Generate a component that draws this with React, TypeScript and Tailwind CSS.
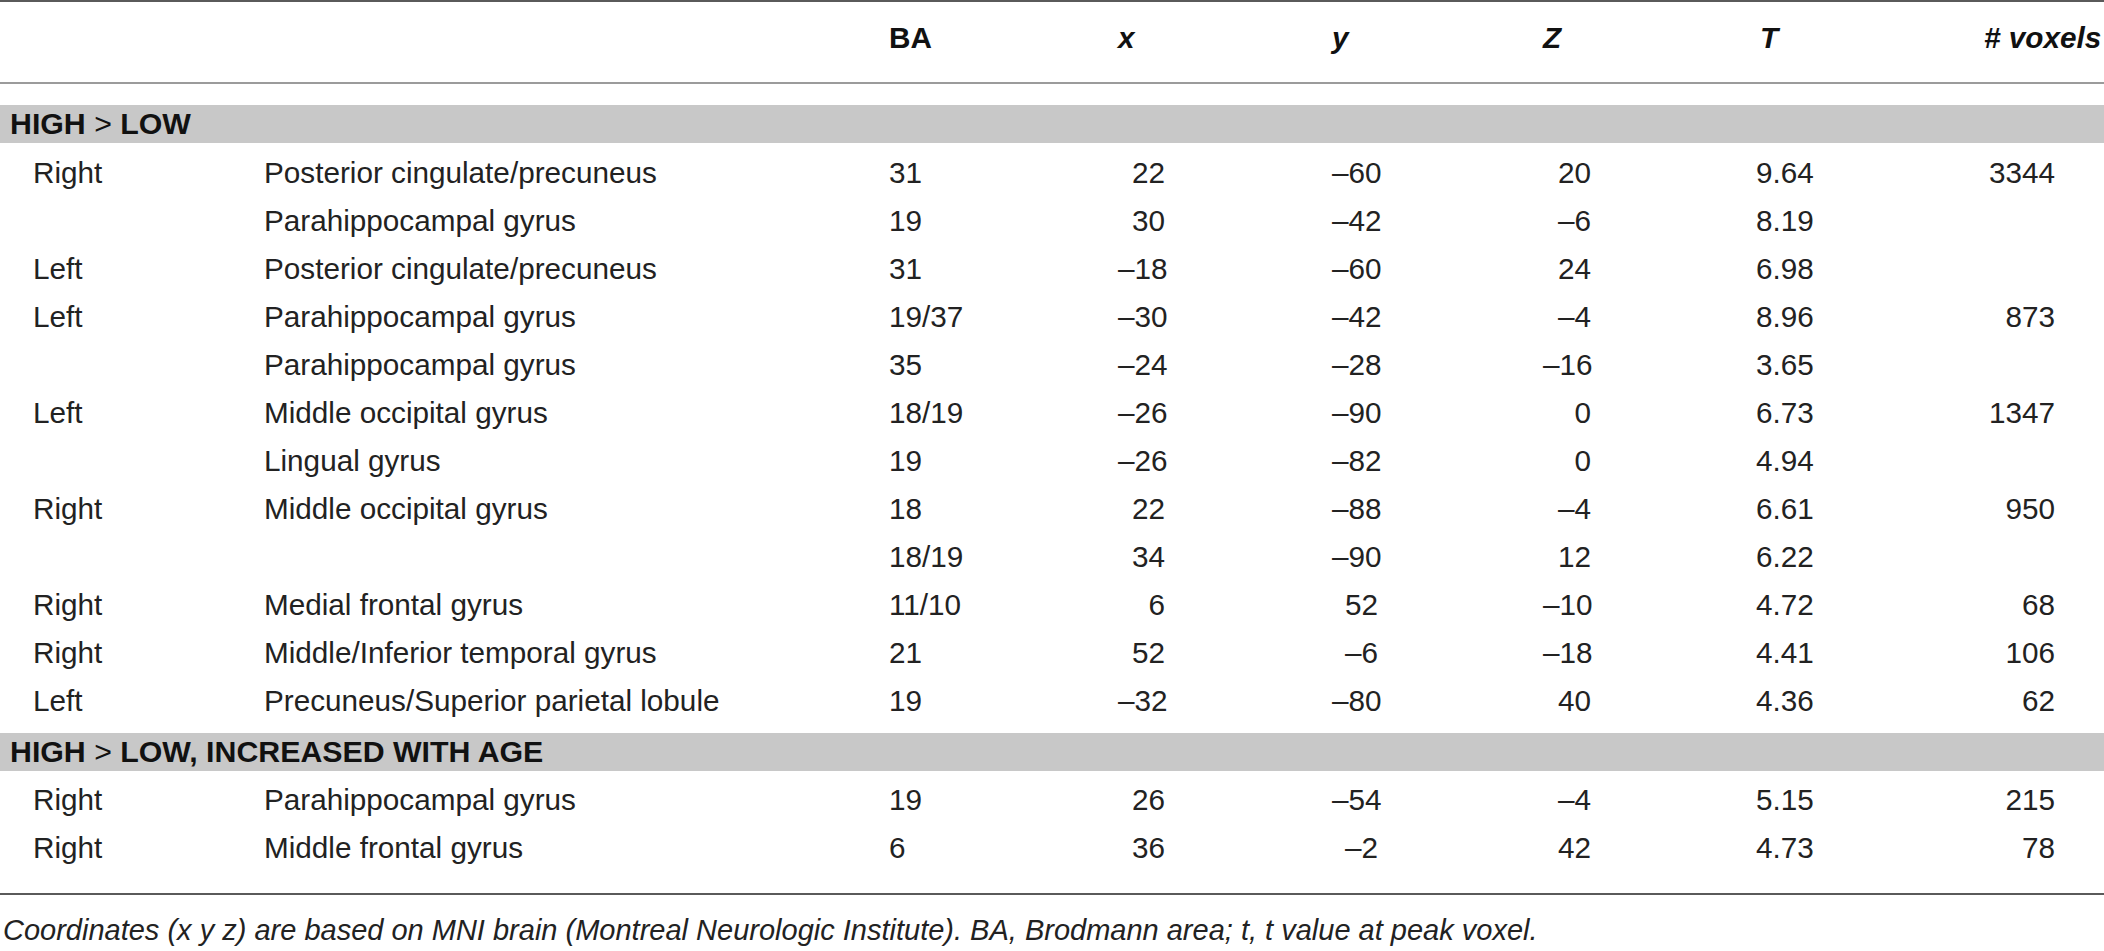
import React from "react";

type Row = [string, string, string, string, string, string, string, string];

const group1: Row[] = [
  ["Right", "Posterior cingulate/precuneus", "31", "22", "–60", "20", "9.64", "3344"],
  ["", "Parahippocampal gyrus", "19", "30", "–42", "–6", "8.19", ""],
  ["Left", "Posterior cingulate/precuneus", "31", "–18", "–60", "24", "6.98", ""],
  ["Left", "Parahippocampal gyrus", "19/37", "–30", "–42", "–4", "8.96", "873"],
  ["", "Parahippocampal gyrus", "35", "–24", "–28", "–16", "3.65", ""],
  ["Left", "Middle occipital gyrus", "18/19", "–26", "–90", "0", "6.73", "1347"],
  ["", "Lingual gyrus", "19", "–26", "–82", "0", "4.94", ""],
  ["Right", "Middle occipital gyrus", "18", "22", "–88", "–4", "6.61", "950"],
  ["", "", "18/19", "34", "–90", "12", "6.22", ""],
  ["Right", "Medial frontal gyrus", "11/10", "6", "52", "–10", "4.72", "68"],
  ["Right", "Middle/Inferior temporal gyrus", "21", "52", "–6", "–18", "4.41", "106"],
  ["Left", "Precuneus/Superior parietal lobule", "19", "–32", "–80", "40", "4.36", "62"],
];

const group2: Row[] = [
  ["Right", "Parahippocampal gyrus", "19", "26", "–54", "–4", "5.15", "215"],
  ["Right", "Middle frontal gyrus", "6", "36", "–2", "42", "4.73", "78"],
];

const gridCols =
  "grid grid-cols-[264px_625px_229px_214px_211px_213px_222px_1fr]";

function DataRow({ r }: { r: Row }) {
  return (
    <div className={`${gridCols} h-[48px] leading-[48px] text-[29.7px]`}>
      <div className="pl-[33px] whitespace-nowrap">{r[0]}</div>
      <div className="whitespace-nowrap">{r[1]}</div>
      <div className="whitespace-nowrap">{r[2]}</div>
      <div>
        <div className="w-[47px] text-right whitespace-nowrap">{r[3]}</div>
      </div>
      <div>
        <div className="w-[46px] text-right whitespace-nowrap">{r[4]}</div>
      </div>
      <div>
        <div className="w-[48px] text-right whitespace-nowrap">{r[5]}</div>
      </div>
      <div className="whitespace-nowrap">{r[6]}</div>
      <div>
        <div className="w-[77px] text-right whitespace-nowrap">{r[7]}</div>
      </div>
    </div>
  );
}

function Band({ children }: { children: React.ReactNode }) {
  return (
    <div className="h-[38px] bg-[#c8c8c8] leading-[38px] pl-[10px] text-[30.3px] font-bold text-[#111] whitespace-nowrap">
      {children}
    </div>
  );
}

export default function App() {
  return (
    <div className="w-[2104px] h-[951px] overflow-hidden bg-white text-[#222] font-['Liberation_Sans',Arial,sans-serif]">
      <div className="h-[2px] bg-[#5a5a5a]" />
      <div className={`${gridCols} h-[80px] pt-[12px] leading-[48px] text-[29.7px] font-bold text-[#111]`}>
        <div />
        <div />
        <div>BA</div>
        <div className="italic">x</div>
        <div className="italic">y</div>
        <div className="italic">Z</div>
        <div className="italic pl-[4px]">T</div>
        <div className="italic whitespace-nowrap pl-[6px]">
          # voxels
        </div>
      </div>
      <div className="h-[2px] bg-[#9b9b9b]" />
      <div className="h-[21px]" />
      <Band>
        HIGH <span className="font-normal">&gt;</span> LOW
      </Band>
      <div className="pt-[6px] pb-[8px]">
        {group1.map((r, i) => (
          <DataRow key={i} r={r} />
        ))}
      </div>
      <Band>
        HIGH <span className="font-normal">&gt;</span> LOW, INCREASED WITH AGE
      </Band>
      <div className="pt-[5px] pb-[21px]">
        {group2.map((r, i) => (
          <DataRow key={i} r={r} />
        ))}
      </div>
      <div className="h-[2px] bg-[#5a5a5a]" />
      <div className="pt-[15px] pl-[3px] leading-[40px] text-[29px] italic whitespace-nowrap">
        Coordinates (x y z) are based on MNI brain (Montreal Neurologic Institute). BA, Brodmann area; t, t value at peak voxel.
      </div>
    </div>
  );
}
